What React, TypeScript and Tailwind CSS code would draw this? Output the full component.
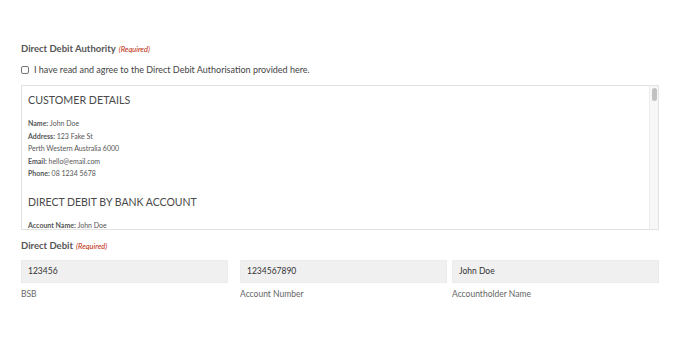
import React from "react";

const font = { fontFamily: "Lato, 'Open Sans', sans-serif" };

function Req() {
  return <span className="ml-[3px] text-[7.5px] italic font-normal text-[#c02b0a]">(Required)</span>;
}

function Field({ value, label, w }: { value: string; label: string; w: string }) {
  return (
    <div className={`flex flex-col ${w}`}>
      <div className="h-[23px] bg-[#f0f0f0] border border-[#ececec] flex items-center px-[6px] text-[8.5px] text-[#333]">
        {value}
      </div>
      <div className="mt-[5px] text-[8.5px] text-[#666] leading-[12px]">{label}</div>
    </div>
  );
}

export default function App() {
  return (
    <div className="w-[680px] h-[346px] bg-white px-[21px] pt-[43px]" style={font}>
      <div className="text-[9.5px] font-bold text-[#555] leading-[12px]">
        Direct Debit Authority<Req />
      </div>
      <div className="mt-[8px] flex items-center h-[12px]">
        <span className="w-[8px] h-[8px] border border-[#777] rounded-[2px] bg-white" />
        <span className="ml-[5px] text-[9px] text-[#444]">
          I have read and agree to the Direct Debit Authorisation provided here.
        </span>
      </div>
      <div className="mt-[9px] h-[145px] w-[638px] border border-[#e2e2e2] flex overflow-hidden">
        <div className="flex-1 pl-[6px] pt-[5px] text-[#555] overflow-hidden">
          <div className="text-[10.7px] leading-[18px] font-normal text-[#4a4a4a]">CUSTOMER DETAILS</div>
          <div className="mt-[8px] text-[7px] leading-[12.5px] text-[#555]">
            <div><b>Name:</b> John Doe</div>
            <div><b>Address:</b> 123 Fake St</div>
            <div>Perth Western Australia 6000</div>
            <div><b>Email:</b> hello@email.com</div>
            <div><b>Phone:</b> 08 1234 5678</div>
          </div>
          <div className="mt-[13px] text-[10.5px] leading-[18px] font-normal text-[#4a4a4a]">DIRECT DEBIT BY BANK ACCOUNT</div>
          <div className="mt-[8px] text-[7px] leading-[12.5px] text-[#555]">
            <div><b>Account Name:</b> John Doe</div>
          </div>
        </div>
        <div className="w-[9px] bg-[#f7f7f7] border-l border-[#ececec] flex justify-center pt-[2px]">
          <div className="w-[5px] h-[13px] rounded-full bg-[#c1c1c1]" />
        </div>
      </div>
      <div className="mt-[10px] text-[9.5px] font-bold text-[#555] leading-[12px]">
        Direct Debit<Req />
      </div>
      <div className="mt-[7px] flex">
        <Field value="123456" label="BSB" w="w-[207px]" />
        <div className="w-[12px]" />
        <Field value="1234567890" label="Account Number" w="w-[207px]" />
        <div className="w-[5px]" />
        <Field value="John Doe" label="Accountholder Name" w="w-[207px]" />
      </div>
    </div>
  );
}
